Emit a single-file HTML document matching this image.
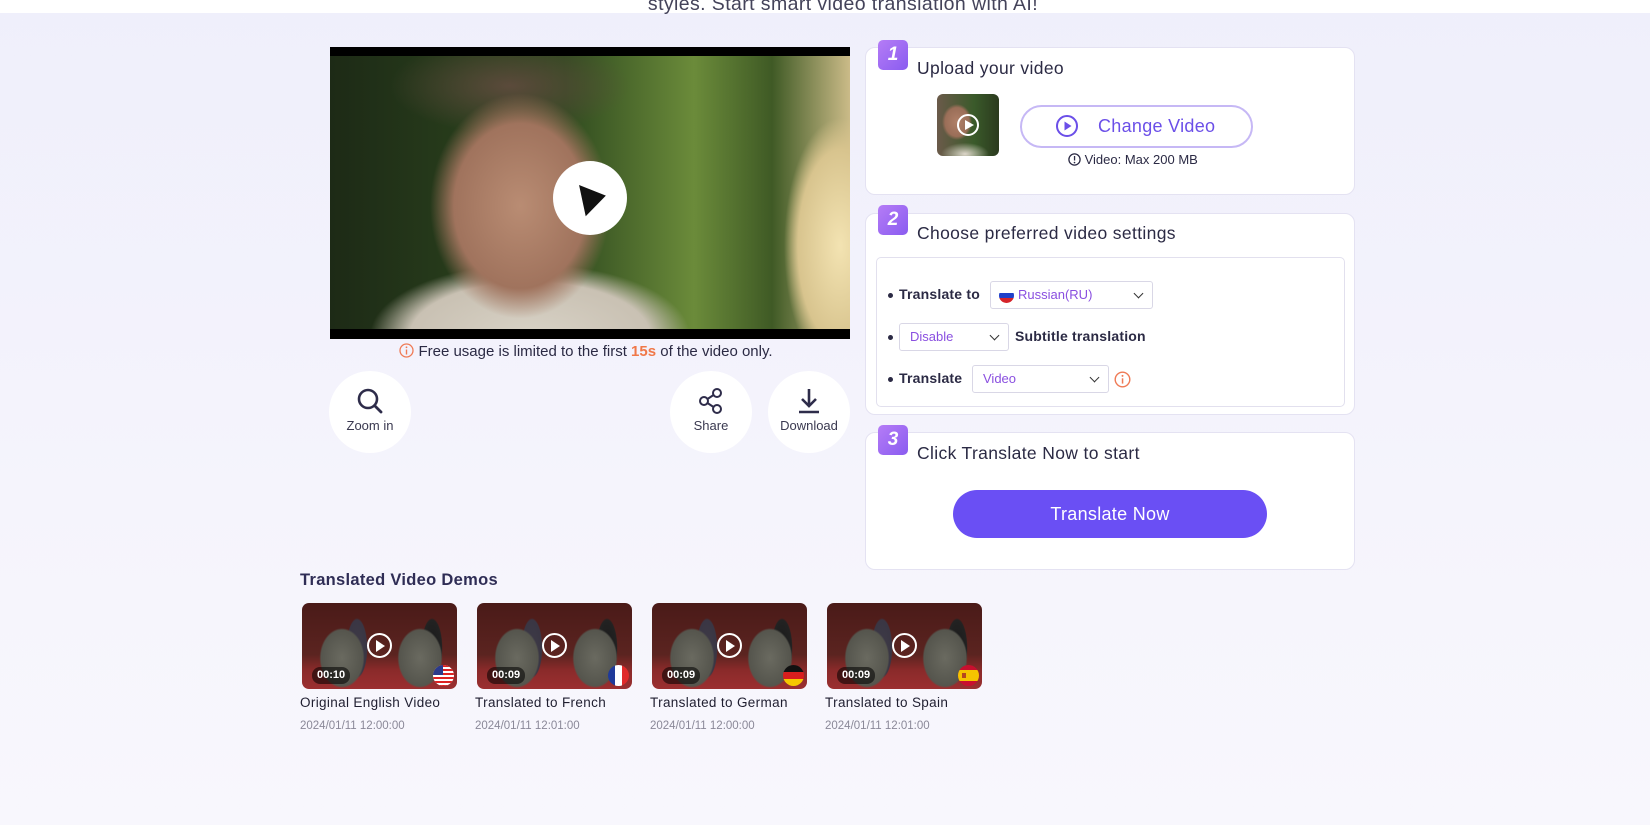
<!DOCTYPE html>
<html><head><meta charset="utf-8"><style>
*{box-sizing:border-box;margin:0;padding:0}
body{width:1650px;height:825px;overflow:hidden;font-family:"Liberation Sans",sans-serif;color:#2b2a44;background:linear-gradient(180deg,#efeffb 0%,#f5f4fc 60%,#f8f7fd 100%);position:relative}
.abs{position:absolute}
.topbar{left:0;top:0;width:1650px;height:13px;background:#fff}
.sub{left:0;width:1686px;top:-7px;text-align:center;font-size:19.5px;color:#44435a;letter-spacing:.4px}
.video{left:330px;top:47px;width:520px;height:292px;background:#000;overflow:hidden}
.frame{position:absolute;left:0;top:9px;width:520px;height:273px;background:
radial-gradient(ellipse 120px 150px at 190px 150px,#b98c73 0%,#a0735d 55%,rgba(0,0,0,0) 75%),
radial-gradient(ellipse 200px 90px at 200px 280px,#d8d2c6 0%,#c9c1b3 60%,rgba(0,0,0,0) 80%),
radial-gradient(ellipse 70px 160px at 510px 190px,#f3e3b2 0%,#d8c48e 60%,rgba(0,0,0,0) 80%),
radial-gradient(ellipse 150px 60px at 180px 30px,#5b4a3b 0%,rgba(0,0,0,0) 80%),
linear-gradient(90deg,#1d2a16 0%,#2f4a1f 45%,#6b8b3a 70%,#3f5a25 85%,#cbbb88 100%)}
.play{left:553px;top:161px;width:74px;height:74px;border-radius:50%;background:#fff}
.note{left:326px;width:520px;top:343px;text-align:center;font-size:15px;color:#2b2a44}
.circ{width:82px;height:82px;border-radius:50%;background:#fff;text-align:center;font-size:13px;color:#3a3950}
.circ svg{display:block;margin:16px auto 3px}
.card{left:865px;width:490px;background:#fff;border:1px solid #e4e2f2;border-radius:10px}
.badge{width:30px;height:30px;border-radius:5px;background:linear-gradient(135deg,#b57cf6,#8a5cf0);color:#fff;font-weight:bold;font-style:italic;font-size:19px;text-align:center;line-height:30px}
.h{font-size:17.5px;color:#2b2a44;letter-spacing:.35px}
.sel{height:28px;border:1px solid #d9d7e6;border-radius:3px;background:#fff;color:#8a4fe0;font-size:13px;line-height:26px;padding-left:10px}
.sel:after{content:"";position:absolute;right:10px;top:8px;width:6px;height:6px;border-right:1.7px solid #333;border-bottom:1.7px solid #333;transform:rotate(45deg)}
.lbl{font-size:14px;font-weight:bold;color:#2b2a44;letter-spacing:.2px}
.dot{width:5px;height:5px;border-radius:50%;background:#2b2a44}
.thumb{width:155px;height:86px;border-radius:7px;overflow:hidden;background:
radial-gradient(ellipse 30px 40px at 40px 55px,#6a6a60 0%,#55554d 70%,rgba(0,0,0,0) 75%),
radial-gradient(ellipse 30px 40px at 118px 55px,#6a6a60 0%,#55554d 70%,rgba(0,0,0,0) 75%),
radial-gradient(ellipse 14px 40px at 130px 45px,#1a1a1a 0%,#222 70%,rgba(0,0,0,0) 75%),
radial-gradient(ellipse 14px 40px at 55px 45px,#3d3a46 0%,#3a3644 70%,rgba(0,0,0,0) 75%),
linear-gradient(180deg,#4a1a18 0%,#5b2420 60%,#8a2a2a 78%,#9b2f30 100%)}
.tp{position:absolute;left:65px;top:30px;width:25px;height:25px;border:2.5px solid #fff;border-radius:50%}
.tp:after{content:"";position:absolute;left:7px;top:4.5px;border-left:9px solid #fff;border-top:6px solid transparent;border-bottom:6px solid transparent}
.dur{position:absolute;left:10px;top:64px;height:17px;padding:0 5px;border-radius:8px;background:rgba(0,0,0,.55);color:#fff;font-size:11px;line-height:17px;font-weight:bold}
.flag{position:absolute;left:131px;top:62px;width:21px;height:21px;border-radius:50%;overflow:hidden}
.tt{font-size:13.5px;color:#1f1e30;letter-spacing:.35px}
.dt{font-size:11.5px;color:#8a8898}
</style></head><body>
<div class="abs topbar"></div>
<div class="abs sub">styles. Start smart video translation with AI!</div>

<div class="abs video"><div class="frame"></div></div>
<div class="abs play"><svg width="74" height="74"><path d="M29 22 L53 38 L29 54 Z" fill="#111" transform="rotate(-12 37 37)"/></svg></div>
<div class="abs note"><svg width="15" height="15" style="vertical-align:-2px;margin-right:4px"><circle cx="7.5" cy="7.5" r="6.5" fill="none" stroke="#ef7a55" stroke-width="1.3"/><rect x="6.8" y="6.5" width="1.4" height="5" fill="#ef7a55"/><circle cx="7.5" cy="4.3" r=".9" fill="#ef7a55"/></svg>Free usage is limited to the first <b style="color:#f07848">15s</b> of the video only.</div>

<div class="abs circ" style="left:329px;top:371px"><svg width="28" height="28"><circle cx="12" cy="12" r="9" fill="none" stroke="#2e2c4a" stroke-width="2.6"/><path d="M19 19 L25 25" stroke="#2e2c4a" stroke-width="2.8" stroke-linecap="round"/></svg>Zoom in</div>
<div class="abs circ" style="left:670px;top:371px"><svg width="28" height="28"><circle cx="20" cy="6" r="4" fill="none" stroke="#2e2c4a" stroke-width="2"/><circle cx="7" cy="14" r="4" fill="none" stroke="#2e2c4a" stroke-width="2"/><circle cx="20" cy="22" r="4" fill="none" stroke="#2e2c4a" stroke-width="2"/><path d="M10.5 12 L16.5 8 M10.5 16 L16.5 20" stroke="#2e2c4a" stroke-width="2"/></svg>Share</div>
<div class="abs circ" style="left:768px;top:371px"><svg width="28" height="28"><path d="M14 2 V19 M7 12 L14 19 L21 12" fill="none" stroke="#2e2c4a" stroke-width="2.6"/><path d="M4 25 H24" stroke="#2e2c4a" stroke-width="2.6"/></svg>Download</div>

<div class="abs card" style="top:47px;height:148px"></div>
<div class="abs badge" style="left:878px;top:40px">1</div>
<div class="abs h" style="left:917px;top:58px">Upload your video</div>
<div class="abs" style="left:937px;top:94px;width:62px;height:62px;border-radius:6px;background:radial-gradient(ellipse 20px 24px at 20px 28px,#b08068 0%,#9a6e58 60%,rgba(0,0,0,0) 75%),radial-gradient(ellipse 30px 14px at 28px 60px,#ddd6ca 0%,rgba(0,0,0,0) 80%),linear-gradient(90deg,#6b5a4a,#3a5a2a 60%,#2b3a1e)"><div style="position:absolute;left:20px;top:20px;width:22px;height:22px;border:2px solid #fff;border-radius:50%"></div><div style="position:absolute;left:28px;top:26px;border-left:9px solid #fff;border-top:5px solid transparent;border-bottom:5px solid transparent"></div></div>
<div class="abs" style="left:1020px;top:105px;width:233px;height:43px;border:2px solid #c6b8f5;border-radius:22px;color:#6b4fe8;font-size:18px;line-height:39px;padding-left:76px;letter-spacing:.3px">Change Video</div>
<svg class="abs" style="left:1055px;top:114px" width="24" height="24"><circle cx="12" cy="12" r="10" fill="none" stroke="#6b4fe8" stroke-width="2"/><path d="M9.5 7.5 L16.5 12 L9.5 16.5 Z" fill="#6b4fe8"/></svg>
<div class="abs" style="left:1068px;top:152px;font-size:13px;color:#2b2a44"><svg width="13" height="13" style="vertical-align:-2px"><circle cx="6.5" cy="6.5" r="5.6" fill="none" stroke="#2b2a44" stroke-width="1.3"/><rect x="5.9" y="3" width="1.3" height="4.5" fill="#2b2a44"/><circle cx="6.5" cy="9.6" r=".8" fill="#2b2a44"/></svg> Video: Max 200 MB</div>

<div class="abs card" style="top:213px;height:202px"></div>
<div class="abs badge" style="left:878px;top:205px">2</div>
<div class="abs h" style="left:917px;top:223px">Choose preferred video settings</div>
<div class="abs" style="left:876px;top:257px;width:469px;height:150px;border:1px solid #e2e0ee;border-radius:5px"></div>
<div class="abs dot" style="left:888px;top:293px"></div>
<div class="abs lbl" style="left:899px;top:286px">Translate to</div>
<div class="abs sel" style="left:990px;top:281px;width:163px;padding-left:27px">Russian(RU)</div>
<svg class="abs" style="left:999px;top:288px" width="15" height="15"><defs><clipPath id="c"><circle cx="7.5" cy="7.5" r="7.5"/></clipPath></defs><g clip-path="url(#c)"><rect width="15" height="5" fill="#fff"/><rect y="5" width="15" height="5" fill="#1f3fc9"/><rect y="10" width="15" height="5" fill="#d5232a"/></g></svg>
<div class="abs dot" style="left:888px;top:335px"></div>
<div class="abs sel" style="left:899px;top:323px;width:110px">Disable</div>
<div class="abs lbl" style="left:1015px;top:328px">Subtitle translation</div>
<div class="abs dot" style="left:888px;top:377px"></div>
<div class="abs lbl" style="left:899px;top:370px">Translate</div>
<div class="abs sel" style="left:972px;top:365px;width:137px">Video</div>
<svg class="abs" style="left:1114px;top:371px" width="17" height="17"><circle cx="8.5" cy="8.5" r="7.3" fill="none" stroke="#ef7a55" stroke-width="1.4"/><rect x="7.8" y="7.3" width="1.5" height="5.3" fill="#ef7a55"/><circle cx="8.5" cy="4.9" r="1" fill="#ef7a55"/></svg>

<div class="abs card" style="top:432px;height:138px"></div>
<div class="abs badge" style="left:878px;top:425px">3</div>
<div class="abs h" style="left:917px;top:443px">Click Translate Now to start</div>
<div class="abs" style="left:953px;top:490px;width:314px;height:48px;border-radius:24px;background:#6a4ff4;color:#fff;font-size:18px;text-align:center;line-height:48px;letter-spacing:.3px">Translate Now</div>

<div class="abs" style="left:300px;top:571px;font-size:16.5px;font-weight:bold;color:#2f2d55;letter-spacing:.3px">Translated Video Demos</div>

<div class="abs thumb" style="left:302px;top:603px"><div class="tp"></div><div class="dur">00:10</div><div class="flag"><svg width="21" height="21"><rect width="21" height="21" fill="#fff"/><g fill="#d22"><rect y="0" width="21" height="2"/><rect y="4" width="21" height="2"/><rect y="8" width="21" height="2"/><rect y="12" width="21" height="2"/><rect y="16" width="21" height="2"/><rect y="20" width="21" height="1"/></g><rect width="10" height="10" fill="#2a3a8a"/></svg></div></div>
<div class="abs thumb" style="left:477px;top:603px"><div class="tp"></div><div class="dur">00:09</div><div class="flag"><svg width="21" height="21"><rect width="7" height="21" fill="#1f3a9a"/><rect x="7" width="7" height="21" fill="#fff"/><rect x="14" width="7" height="21" fill="#e02a2a"/></svg></div></div>
<div class="abs thumb" style="left:652px;top:603px"><div class="tp"></div><div class="dur">00:09</div><div class="flag"><svg width="21" height="21"><rect width="21" height="7" fill="#111"/><rect y="7" width="21" height="7" fill="#d81e1e"/><rect y="14" width="21" height="7" fill="#f5c800"/></svg></div></div>
<div class="abs thumb" style="left:827px;top:603px"><div class="tp"></div><div class="dur">00:09</div><div class="flag"><svg width="21" height="21"><rect width="21" height="21" fill="#c8102e"/><rect y="5" width="21" height="11" fill="#f5c400"/><rect x="4" y="8" width="4" height="5" fill="#b5481e"/></svg></div></div>

<div class="abs tt" style="left:300px;top:695px">Original English Video</div>
<div class="abs tt" style="left:475px;top:695px">Translated to French</div>
<div class="abs tt" style="left:650px;top:695px">Translated to German</div>
<div class="abs tt" style="left:825px;top:695px">Translated to Spain</div>
<div class="abs dt" style="left:300px;top:720px">2024/01/11 12:00:00</div>
<div class="abs dt" style="left:475px;top:720px">2024/01/11 12:01:00</div>
<div class="abs dt" style="left:650px;top:720px">2024/01/11 12:00:00</div>
<div class="abs dt" style="left:825px;top:720px">2024/01/11 12:01:00</div>
</body></html>
